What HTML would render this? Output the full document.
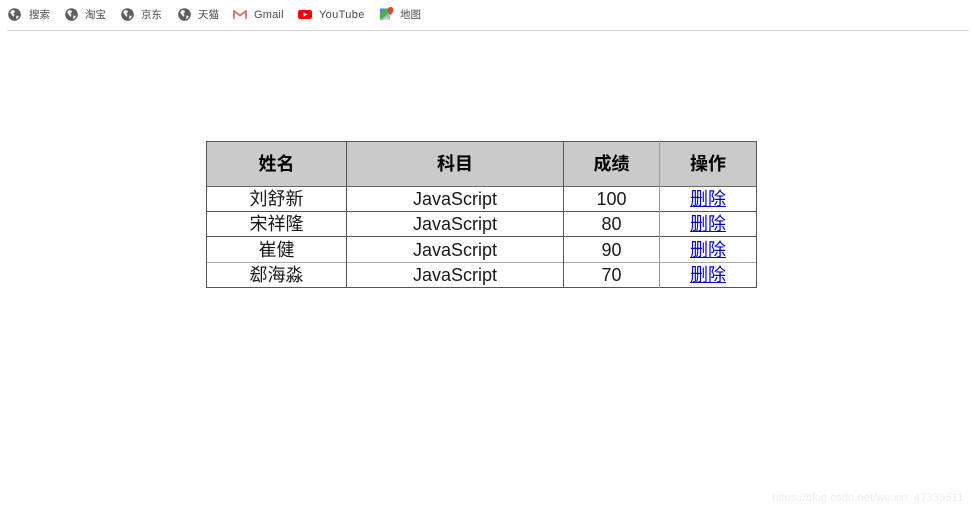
<!DOCTYPE html>
<html>
<head>
<meta charset="utf-8">
<style>
html,body{margin:0;padding:0;background:#fff;width:971px;height:514px;overflow:hidden}
body{position:relative;font-family:"Liberation Sans","Noto Sans CJK SC",sans-serif}
.b{position:absolute;font-size:10.5px;line-height:14px;top:8px;color:#4a4a4a;white-space:nowrap}
.i{position:absolute;top:8px;width:13px;height:13px}
.l{position:absolute}
.c{position:absolute;text-align:center;font-size:18px;line-height:25px;color:#1a1a1a;white-space:nowrap}
.h{position:absolute;text-align:center;font-size:18px;line-height:45px;top:142px;height:44px;font-weight:bold;color:#000;background:#cacaca}
a{color:#0000c8;text-decoration:underline}
</style>
</head>
<body>
<svg class="i" style="left:8px" viewBox="0 0 13 13"><circle cx="6.500" cy="6.500" r="6.300" fill="#5e5e5e"/><path d="M2 4.500l2-2.500 2.500.5.500 1.500-1.500 1.500 1 1.500-1 2-1.500-2zM8.500 7.500l2.500.5-1.500 2.500-1.500.5z" fill="#f4f4f4"/></svg>
<div class="b" style="left:29px">搜索</div>
<svg class="i" style="left:65px" viewBox="0 0 13 13"><circle cx="6.500" cy="6.500" r="6.300" fill="#5e5e5e"/><path d="M2 4.500l2-2.500 2.500.5.500 1.500-1.500 1.500 1 1.500-1 2-1.500-2zM8.500 7.500l2.500.5-1.500 2.500-1.500.5z" fill="#f4f4f4"/></svg>
<div class="b" style="left:85px">淘宝</div>
<svg class="i" style="left:121px" viewBox="0 0 13 13"><circle cx="6.500" cy="6.500" r="6.300" fill="#5e5e5e"/><path d="M2 4.500l2-2.500 2.500.5.500 1.500-1.500 1.500 1 1.500-1 2-1.500-2zM8.500 7.500l2.500.5-1.500 2.500-1.500.5z" fill="#f4f4f4"/></svg>
<div class="b" style="left:141px">京东</div>
<svg class="i" style="left:178px" viewBox="0 0 13 13"><circle cx="6.500" cy="6.500" r="6.300" fill="#5e5e5e"/><path d="M2 4.500l2-2.500 2.500.5.500 1.500-1.500 1.500 1 1.500-1 2-1.500-2zM8.500 7.500l2.500.5-1.500 2.500-1.500.5z" fill="#f4f4f4"/></svg>
<div class="b" style="left:198px">天猫</div>

<svg class="i" style="left:233px;top:10px;width:14px;height:9px" viewBox="0 0 14 9"><path d="M1 9V1L7 5.500 13 1v8" fill="none" stroke="#d8706a" stroke-width="1.800"/></svg>
<div class="b" style="left:254px;font-size:11px;letter-spacing:.2px">Gmail</div>
<svg class="i" style="left:298px;top:10px;width:14px;height:9px" viewBox="0 0 14 9"><rect x="0" y="0" width="14" height="9" rx="2.200" fill="#f00"/><path d="M5.500 2.200l3.800 2.300-3.800 2.300z" fill="#fff"/></svg>
<div class="b" style="left:319px;font-size:11px;letter-spacing:.35px">YouTube</div>
<svg class="i" style="left:380px;top:7px;width:14px;height:14px" viewBox="0 0 14 14"><path d="M0 1.500h10v11.500H0z" fill="#4caf50"/><path d="M0 13L10 5v8z" fill="#8fb8ee"/><path d="M0 1.500h5L0 6z" fill="#4285f4"/><path d="M2.500 13l4.500-3.500 3 3.500z" fill="#f6d45c"/><path d="M10.500 0a3 3 0 0 1 3 3c0 2-3 5-3 5s-3-3-3-5a3 3 0 0 1 3-3z" fill="#e0453a"/></svg>
<div class="b" style="left:400px">地图</div>

<div class="l" style="left:7px;top:30px;width:962px;height:1px;background:#d8d8dc"></div>

<div class="h" style="left:207px;width:139px">姓名</div>
<div class="h" style="left:347px;width:216px">科目</div>
<div class="h" style="left:564px;width:95px">成绩</div>
<div class="h" style="left:660px;width:96px">操作</div>

<div class="l" style="left:206px;top:141px;width:551px;height:1px;background:#555"></div>
<div class="l" style="left:206px;top:186px;width:551px;height:1px;background:#666"></div>
<div class="l" style="left:206px;top:211px;width:551px;height:1px;background:#555"></div>
<div class="l" style="left:206px;top:236px;width:551px;height:1px;background:#555"></div>
<div class="l" style="left:206px;top:262px;width:551px;height:1px;background:#aaa"></div>
<div class="l" style="left:206px;top:287px;width:551px;height:1px;background:#555"></div>
<div class="l" style="left:206px;top:141px;width:1px;height:147px;background:#555"></div>
<div class="l" style="left:346px;top:141px;width:1px;height:147px;background:#555"></div>
<div class="l" style="left:563px;top:141px;width:1px;height:147px;background:#555"></div>
<div class="l" style="left:659px;top:141px;width:1px;height:147px;background:#999"></div>
<div class="l" style="left:756px;top:141px;width:1px;height:147px;background:#555"></div>

<div class="c" style="left:207px;width:139px;top:187px">刘舒新</div>
<div class="c" style="left:347px;width:216px;top:187px">JavaScript</div>
<div class="c" style="left:564px;width:95px;top:187px">100</div>
<div class="c" style="left:660px;width:96px;top:187px"><a>删除</a></div>

<div class="c" style="left:207px;width:139px;top:212px">宋祥隆</div>
<div class="c" style="left:347px;width:216px;top:212px">JavaScript</div>
<div class="c" style="left:564px;width:95px;top:212px">80</div>
<div class="c" style="left:660px;width:96px;top:212px"><a>删除</a></div>

<div class="c" style="left:207px;width:139px;top:238px">崔健</div>
<div class="c" style="left:347px;width:216px;top:238px">JavaScript</div>
<div class="c" style="left:564px;width:95px;top:238px">90</div>
<div class="c" style="left:660px;width:96px;top:238px"><a>删除</a></div>

<div class="c" style="left:207px;width:139px;top:263px">郄海淼</div>
<div class="c" style="left:347px;width:216px;top:263px">JavaScript</div>
<div class="c" style="left:564px;width:95px;top:263px">70</div>
<div class="c" style="left:660px;width:96px;top:263px"><a>删除</a></div>

<div class="b" style="left:772px;top:491px;font-size:11.300px;color:#ececec">https://blog.csdn.net/weixin_47339511</div>
</body>
</html>
